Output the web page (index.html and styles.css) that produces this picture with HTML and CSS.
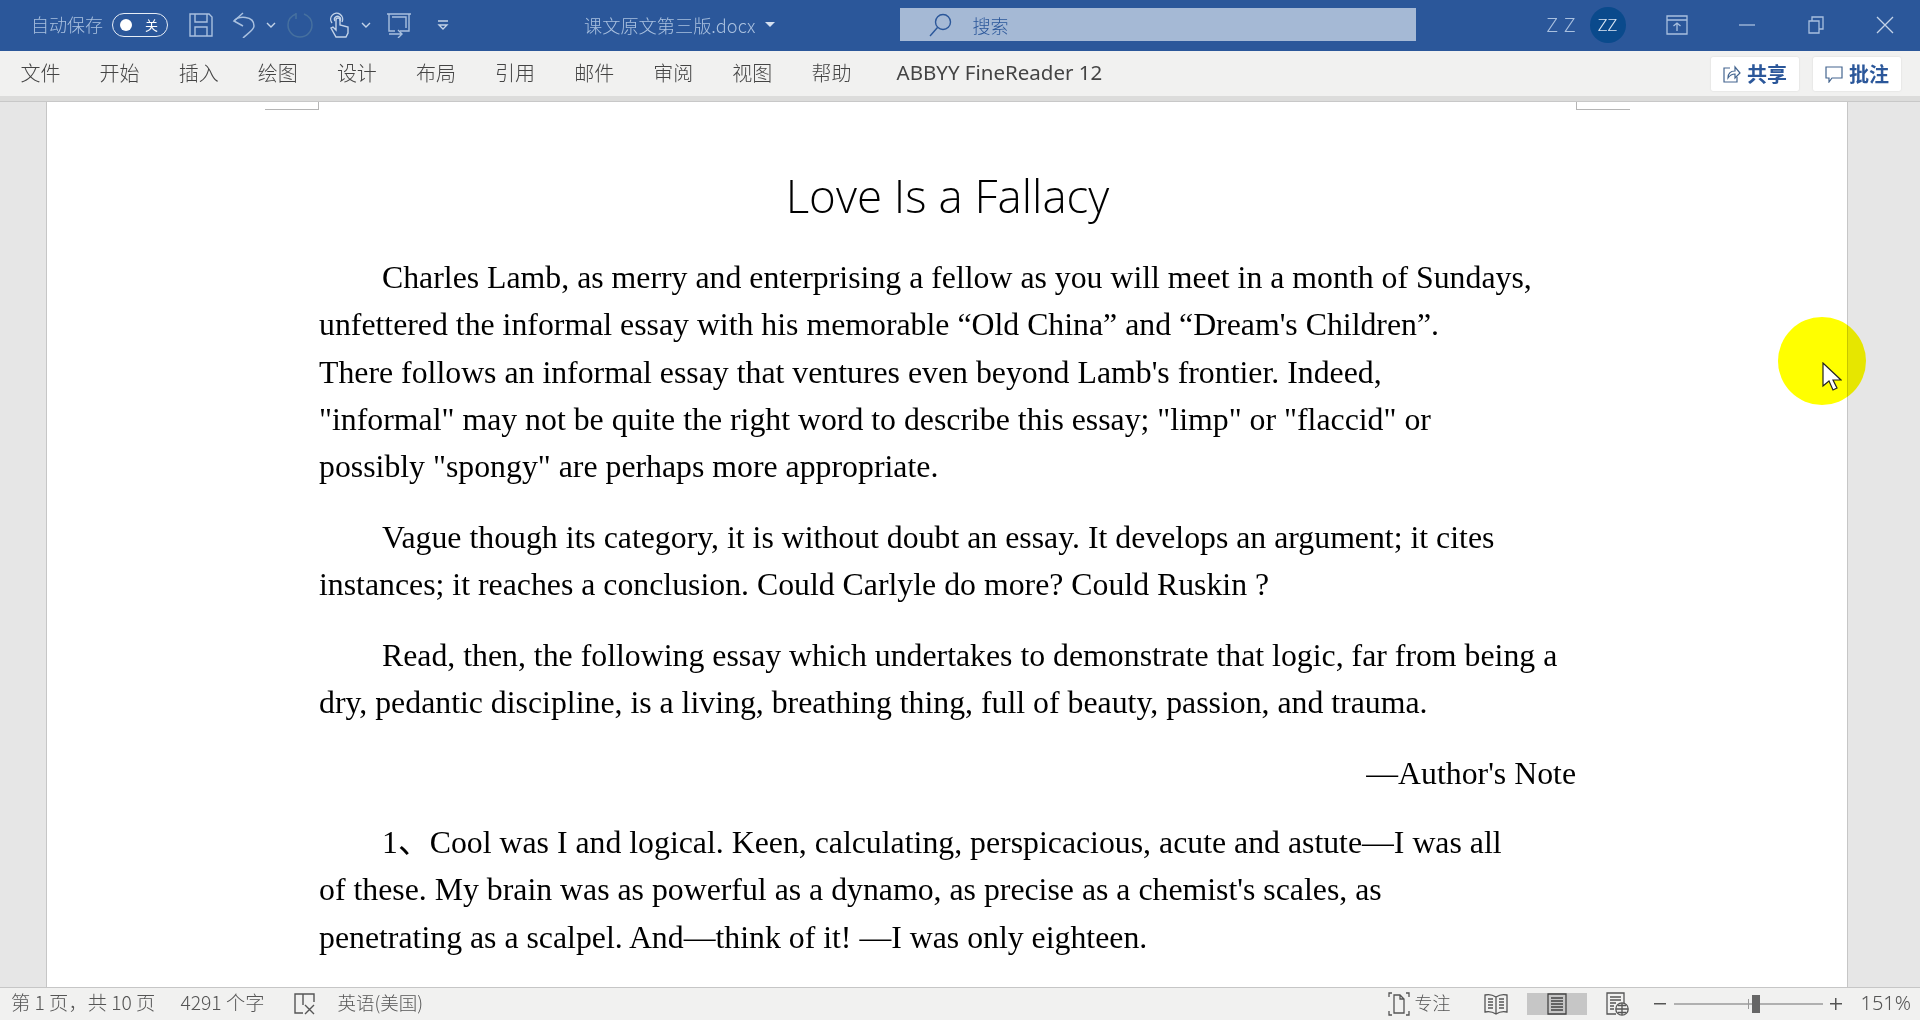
FILE: index.html
```html
<!DOCTYPE html>
<html lang="zh-CN">
<head>
    <meta charset="UTF-8">
    <title>课文原文第三版.docx - Word</title>
    <link rel="stylesheet" href="styles.css">
</head>
<body>
    <header class="titlebar">
        <span class="autosave">自动保存</span>
        <span class="toggle"><i class="toggle-knob"></i><b class="toggle-text">关</b></span>
        <svg class="qa qa-save" width="24" height="24" viewBox="0 0 24 24" fill="none" stroke="#a9c0df" stroke-width="1.4"><path d="M1 1h19l3 3v19H1z"/><path d="M6 1v8h12V1M6 23v-9h12v9"/></svg>
        <svg class="qa qa-undo" width="24" height="26" viewBox="0 0 24 26" fill="none" stroke="#a9c0df" stroke-width="1.5"><path d="M11 1L2 9l9 5"/><path d="M2 9c4-5 20-6 20 5 0 4-7 8-11 12"/></svg>
        <svg class="qa qa-chev" width="10" height="6" viewBox="0 0 10 6" fill="none" stroke="#c3d3e8" stroke-width="1.4"><path d="M1 1l4 4 4-4"/></svg>
        <svg class="qa qa-redo" width="26" height="26" viewBox="0 0 26 26" fill="none" stroke="#46709f" stroke-width="1.5"><path d="M9 2C4 4 1 8 1 13a12 12 0 0 0 24 0c0-5-3-9-8-11"/><path d="M9 1v6"/></svg>
        <svg class="qa qa-touch" width="20" height="26" viewBox="0 0 20 26" fill="none" stroke="#c3d3e8" stroke-width="1.4"><path d="M3 11a6 6 0 1 1 10-1"/><path d="M6 9a3 3 0 1 1 5 0"/><path d="M7 8v10l-3-3-2 1 5 9h10l2-4v-6l-8-2V8a1.500 1.500 0 0 0-4 0z"/></svg>
        <svg class="qa qa-chev2" width="10" height="6" viewBox="0 0 10 6" fill="none" stroke="#c3d3e8" stroke-width="1.4"><path d="M1 1l4 4 4-4"/></svg>
        <svg class="qa qa-present" width="26" height="26" viewBox="0 0 26 26" fill="none" stroke="#a9c0df" stroke-width="1.4"><path d="M1 2h24M3 2v17h6M23 2v17h-9M6 5h14v11"/><path d="M3 22h12M12 18l4 4-4 4"/></svg>
        <svg class="qa qa-more" width="12" height="10" viewBox="0 0 12 10" fill="none" stroke="#c3d3e8" stroke-width="1.3"><path d="M1 1h10M2 5l4 4 4-4z"/></svg>
        <span class="doc-name">课文原文第三版.docx</span>
        <i class="caret"></i>
        <div class="search">
            <svg width="24" height="24" viewBox="0 0 24 24" fill="none" stroke="#2b579a" stroke-width="1.4"><circle cx="15" cy="9" r="7.500"/><path d="M9.500 14.500L2 23"/></svg>
            <span>搜索</span>
        </div>
        <span class="user-name">Z Z</span>
        <span class="avatar">ZZ</span>
        <svg class="win win-ribbon" width="22" height="20" viewBox="0 0 22 20" fill="none" stroke="#a9c0df" stroke-width="1.3"><path d="M1 1h20v18H1zM1 5h20M11 16V8M7.500 11L11 8l3.500 3"/></svg>
        <svg class="win win-min" width="16" height="2" viewBox="0 0 16 2"><path d="M0 1h16" stroke="#a9c0df" stroke-width="1.3"/></svg>
        <svg class="win win-restore" width="16" height="18" viewBox="0 0 16 18" fill="none" stroke="#a9c0df" stroke-width="1.3"><path d="M1 5h10v12H1zM4 5V1h11v12h-4"/></svg>
        <svg class="win win-close" width="18" height="18" viewBox="0 0 18 18" fill="none" stroke="#c3d3e8" stroke-width="1.3"><path d="M1 1l16 16M17 1L1 17"/></svg>
    </header>

    <nav class="ribbon">
        <span class="tab">文件</span>
        <span class="tab">开始</span>
        <span class="tab">插入</span>
        <span class="tab">绘图</span>
        <span class="tab">设计</span>
        <span class="tab">布局</span>
        <span class="tab">引用</span>
        <span class="tab">邮件</span>
        <span class="tab">审阅</span>
        <span class="tab">视图</span>
        <span class="tab">帮助</span>
        <span class="tab tab-addin">ABBYY FineReader 12</span>
        <div class="ribbon-actions">
            <button class="action">
                <svg width="18" height="18" viewBox="0 0 18 18" fill="none" stroke="#44658f" stroke-width="1.2"><path d="M7 3H1v14h13v-5"/><path d="M5 13c0-5 3-7 7-7V2l5 6-5 5V9c-3 0-5 1-7 4z"/></svg>
                共享
            </button>
            <button class="action">
                <svg width="18" height="18" viewBox="0 0 18 18" fill="none" stroke="#44658f" stroke-width="1.2"><path d="M1 2h16v11H7l-3 4v-4H1z"/></svg>
                批注
            </button>
        </div>
    </nav>
    <div class="ribbon-shade"></div>

    <main class="workspace">
        <article class="page">
            <div class="crop-marks"><i class="crop-left"></i><i class="crop-right"></i></div>
            <div class="text">
                <h1 class="doc-title">Love Is a Fallacy</h1>
                <p class="para">Charles Lamb, as merry and enterprising a fellow as you will meet in a month of Sundays,<br>unfettered the informal essay with his memorable “Old China” and “Dream's Children”.<br>There follows an informal essay that ventures even beyond Lamb's frontier. Indeed,<br>"informal" may not be quite the right word to describe this essay; "limp" or "flaccid" or<br>possibly "spongy" are perhaps more appropriate.</p>
                <p class="para">Vague though its category, it is without doubt an essay. It develops an argument; it cites<br>instances; it reaches a conclusion. Could Carlyle do more? Could Ruskin ?</p>
                <p class="para">Read, then, the following essay which undertakes to demonstrate that logic, far from being a<br>dry, pedantic discipline, is a living, breathing thing, full of beauty, passion, and trauma.</p>
                <p class="para para-right">—Author's Note</p>
                <p class="para para-last">1、Cool was I and logical. Keen, calculating, perspicacious, acute and astute—I was all<br>of these. My brain was as powerful as a dynamo, as precise as a chemist's scales, as<br>penetrating as a scalpel. And—think of it! —I was only eighteen.</p>
            </div>
        </article>
        <div class="pointer">
            <svg width="20" height="29" viewBox="0 0 20 29"><path d="M1 1v23l6-5 4 9 4-2-4-8h8z" fill="#fff" stroke="#222" stroke-width="1.200"/></svg>
        </div>
    </main>

    <footer class="statusbar">
        <span class="st st-page">第 1 页，共 10 页</span>
        <span class="st st-words">4291 个字</span>
        <svg class="st-proof" width="22" height="24" viewBox="0 0 22 24" fill="none" stroke="#555" stroke-width="1.400"><path d="M9 2H1v19h8M9 2h11v8M9 2v11"/><path d="M11 13l9 9M20 13l-9 9"/></svg>
        <span class="st st-lang">英语(美国)</span>
        <div class="st-right">
            <svg width="22" height="24" viewBox="0 0 22 24" fill="none" stroke="#555" stroke-width="1.300"><path d="M1 5V1h3M21 5V1h-3M1 19v4h3M21 19v4h-3"/><path d="M6 3h6l4 4v14H6zM12 3v4h4"/></svg>
            <span class="st st-focus">专注</span>
            <svg class="view-read" width="24" height="22" viewBox="0 0 24 22" fill="none" stroke="#555" stroke-width="1.300"><path d="M12 4C9 2 5 1 1 2v17c4-1 8 0 11 2 3-2 7-3 11-2V2c-4-1-8 0-11 2zM12 4v17M4 6h5M4 9h5M4 12h5M4 15h5M15 6h5M15 9h5M15 12h5M15 15h5"/></svg>
            <span class="view-print">
                <svg width="20" height="22" viewBox="0 0 20 22" fill="none" stroke="#444" stroke-width="1.300"><path d="M1 1h18v20H1zM4 5h12M4 8h12M4 11h12M4 14h12M4 17h12"/></svg>
            </span>
            <svg class="view-web" width="24" height="24" viewBox="0 0 24 24" fill="none" stroke="#555" stroke-width="1.300"><path d="M11 22H2V1h17v10M5 5h11M5 8h11M5 11h6M5 14h4M5 17h4"/><circle cx="17" cy="17" r="6.200" fill="#f1f1f0"/><path d="M11 17h12M17 11v12M13 13.500h8M13 20.500h8"/></svg>
            <span class="zoom-minus"></span>
            <div class="slider"><i class="slider-tick"></i><i class="slider-thumb"></i></div>
            <span class="zoom-plus"></span>
            <span class="st st-zoom">151%</span>
        </div>
    </footer>
</body>
</html>
```

FILE: styles.css
```css
* {
    box-sizing: border-box;
}

html, body {
    margin: 0;
    height: 100%;
}

body {
    display: flex;
    flex-direction: column;
    height: 1020px;
    overflow: hidden;
    background-color: #e6e6e6;
    font-family: "Noto Sans CJK SC", "Noto Sans", sans-serif;
}

/* title bar */
.titlebar {
    display: flex;
    align-items: center;
    flex: none;
    height: 51px;
    padding-left: 31px;
    padding-bottom: 2px;
    background-color: #2b579a;
    color: #a9c0df;
}

.autosave {
    width: 72px;
    font-size: 18px;
    font-weight: 300;
    white-space: nowrap;
    line-height: 1;
    padding-bottom: 2px;
}

.toggle {
    display: flex;
    align-items: center;
    justify-content: space-between;
    width: 56px;
    height: 24px;
    margin-left: 9px;
    padding: 0 9px 0 7px;
    border: 1.5px solid #e6edf6;
    border-radius: 12px;
}

.toggle-knob {
    width: 12px;
    height: 12px;
    border-radius: 50%;
    background-color: #fff;
}

.toggle-text {
    color: #fff;
    font-size: 13px;
    font-weight: 400;
}

.qa-save { margin-left: 21px; }
.qa-undo { margin-left: 19px; }
.qa-chev { margin-left: 10px; }
.qa-redo { margin-left: 11px; }
.qa-touch { margin-left: 16px; }
.qa-chev2 { margin-left: 12px; }
.qa-present { margin-left: 15px; }
.qa-more { margin-left: 25px; }

.doc-name {
    margin-left: 135px;
    font-size: 18.200px;
    font-weight: 300;
    white-space: nowrap;
}

.caret {
    margin-left: 10px;
    border-top: 5px solid #d5e0ef;
    border-left: 5px solid transparent;
    border-right: 5px solid transparent;
}

.search {
    display: flex;
    align-items: center;
    gap: 20px;
    width: 516px;
    height: 33px;
    margin-left: 125px;
    padding-left: 28px;
    background-color: #a5b9d5;
    color: #2b579a;
    font-size: 18px;
    font-weight: 300;
}

.user-name {
    margin-left: 130px;
    font-family: "Noto Sans", sans-serif;
    font-size: 20px;
    font-weight: 300;
    word-spacing: 1px;
}

.avatar {
    display: flex;
    align-items: center;
    justify-content: center;
    width: 36px;
    height: 36px;
    margin-left: 14px;
    border-radius: 50%;
    background-color: #0a4a8c;
    color: #dbe6f3;
    font-family: "Noto Sans", sans-serif;
    font-size: 17px;
    font-weight: 300;
}

.win-ribbon { margin-left: 40px; }
.win-min { margin-left: 51px; }
.win-restore { margin-left: 53px; }
.win-close { margin-left: 52px; }

/* tabs */
.ribbon {
    display: flex;
    align-items: center;
    flex: none;
    gap: 39.100px;
    height: 45px;
    padding-left: 20.500px;
    background-color: #f1f1f0;
    color: #444;
}

.tab {
    padding-bottom: 2px;
    font-size: 20px;
    font-weight: 300;
    white-space: nowrap;
}

.tab-addin {
    margin-left: 6px;
    padding-bottom: 4px;
    font-family: "Noto Sans", sans-serif;
    font-weight: 400;
    font-size: 20.500px;
}

.ribbon-actions {
    display: flex;
    gap: 14px;
    margin-left: auto;
    padding-right: 19px;
}

.action {
    display: flex;
    align-items: center;
    justify-content: center;
    gap: 6px;
    width: 88px;
    height: 34px;
    padding: 0;
    border: none;
    border-radius: 2px;
    background-color: #fff;
    box-shadow: 0 0 2px rgba(0, 0, 0, 0.12);
    color: #2b579a;
    font-family: inherit;
    font-size: 20px;
    font-weight: 700;
}

.ribbon-shade {
    flex: none;
    height: 6px;
    background-color: #dcdcdb;
    border-bottom: 1px solid #c8c8c8;
}

/* document */
.workspace {
    position: relative;
    flex: 1;
    min-height: 0;
    overflow: hidden;
}

.page {
    width: 1802px;
    height: 100%;
    margin-left: 46px;
    border-left: 1px solid #c6c6c6;
    border-right: 1px solid #c6c6c6;
    background-color: #fff;
    color: #000;
}

.crop-marks {
    display: flex;
    justify-content: space-between;
    width: 1365px;
    height: 8px;
    margin-left: 218px;
}

.crop-marks i {
    width: 54px;
    border-bottom: 1px solid #b5b5b5;
}

.crop-left {
    border-right: 1px solid #b5b5b5;
}

.crop-right {
    border-left: 1px solid #b5b5b5;
}

.text {
    width: 1257px;
    margin-left: 272px;
}

.doc-title {
    margin: 55px 0 29px;
    font-family: "Open Sans", sans-serif;
    font-size: 45.700px;
    font-weight: 300;
    line-height: 60px;
    text-align: center;
}

.para {
    margin: 0 0 23.500px;
    font-family: "Liberation Serif", "Noto Sans CJK SC", serif;
    font-size: 31.800px;
    line-height: 47.300px;
    text-indent: 63px;
    white-space: nowrap;
}

.para-last {
    margin-top: -2px;
}

.para-right {
    text-align: right;
}

/* presenter's highlighted pointer */
.pointer {
    position: absolute;
    left: 1778px;
    top: 215px;
    width: 88px;
    height: 88px;
    border-radius: 50%;
    background-color: #ffff00;
    mix-blend-mode: multiply;
}

.pointer svg {
    position: absolute;
    left: 44px;
    top: 45px;
}

/* status bar */
.statusbar {
    display: flex;
    align-items: center;
    flex: none;
    height: 33px;
    padding-left: 11px;
    border-top: 1px solid #c6c6c6;
    background-color: #f1f1f0;
    color: #555;
}

.st {
    padding-bottom: 4px;
    font-size: 19.300px;
    font-weight: 300;
    white-space: nowrap;
}

.st-words { margin-left: 25px; }
.st-proof { margin-left: 29px; }

.st-lang {
    margin-left: 22px;
    font-size: 18.500px;
}

.st-right {
    display: flex;
    align-items: center;
    align-self: stretch;
    margin-left: auto;
    padding-right: 9px;
}

.st-focus {
    margin-left: 5px;
    font-size: 18px;
}

.view-read { margin-left: 33px; }

.view-print {
    display: flex;
    align-items: center;
    justify-content: center;
    width: 60px;
    margin-left: 19px;
    background-color: #c6c6c6;
}

.view-web { margin-left: 18px; }

.zoom-minus,
.zoom-plus {
    position: relative;
    width: 12px;
    height: 12px;
    background: linear-gradient(#555, #555) center / 12px 1.500px no-repeat;
}

.zoom-minus { margin-left: 25px; }

.zoom-plus {
    background:
        linear-gradient(#555, #555) center / 12px 1.500px no-repeat,
        linear-gradient(#555, #555) center / 1.500px 12px no-repeat;
    margin-left: 7px;
}

.slider {
    position: relative;
    width: 149px;
    height: 2px;
    margin-left: 8px;
    background-color: #b0b0b0;
}

.slider-tick {
    position: absolute;
    left: 74px;
    top: -4px;
    width: 1px;
    height: 10px;
    background-color: #999;
}

.slider-thumb {
    position: absolute;
    left: 78px;
    top: -8px;
    width: 8px;
    height: 18px;
    background-color: #666;
}

.st-zoom {
    margin-left: 19px;
    font-family: "Noto Sans", sans-serif;
    font-size: 20px;
}
```
